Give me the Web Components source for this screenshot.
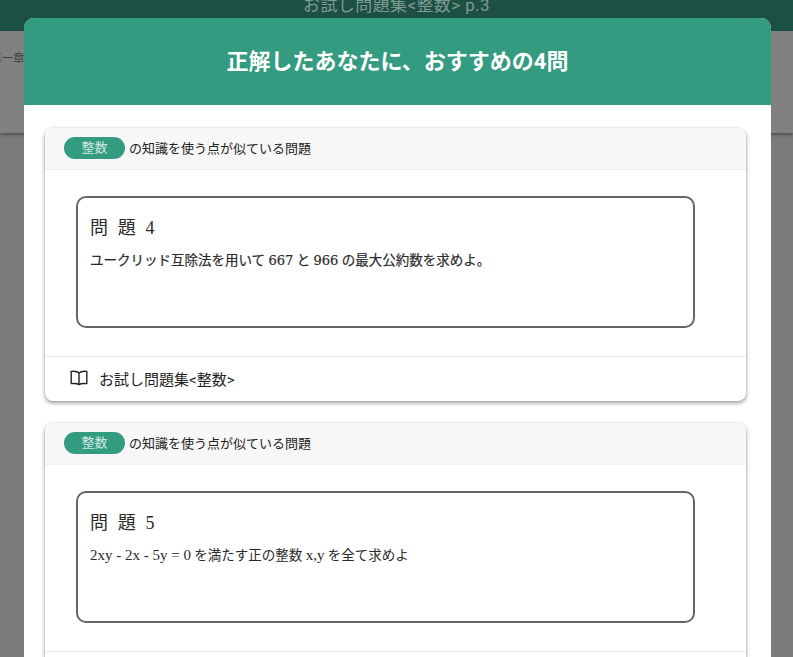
<!DOCTYPE html>
<html lang="ja">
<head>
<meta charset="utf-8">
<title>お試し問題集</title>
<style>
  html, body { margin: 0; height: 100%; overflow: hidden; }
  body { font-family: Roboto, "Noto Sans CJK JP", sans-serif; }
  .wide { font-family: "DejaVu Serif", serif; font-size: 13px; }
  .formula { font-size: 15px; line-height: 1; }
</style>
</head>
<body>
<app-page>
  <span slot="title">お試し問題集&lt;整数&gt; p.3</span>
  <span slot="crumb">第一章</span>
</app-page>
<recommend-modal heading="正解したあなたに、おすすめの4問">
  <problem-card tag="整数" number="4" book="お試し問題集&lt;整数&gt;" style="--text-stroke: .2px">ユークリッド互除法を用いて <span class="wide">667</span> と <span class="wide">966</span> の最大公約数を求めよ。</problem-card>
  <problem-card tag="整数" number="5" book="お試し問題集&lt;整数&gt;"><span class="formula">2xy - 2x - 5y = 0</span> を満たす正の整数 <span class="formula">x,y</span> を全て求めよ</problem-card>
</recommend-modal>
<script>
class AppPage extends HTMLElement {
  constructor() {
    super();
    this.attachShadow({ mode: 'open' });
    this.shadowRoot.innerHTML = `
      <style>
        :host { display: block; height: 657px; background: #7b7b7b; overflow: hidden; }
        .bar {
          height: 31px;
          background: #1b5042;
          color: #7f9b92;
          font-size: 17px;
          line-height: 10px;
          letter-spacing: .4px;
          text-align: center;
          overflow: hidden;
        }
        .sub {
          height: 102px;
          background: #818181;
          box-shadow: 0 2px 3px rgba(0,0,0,.35);
          color: #3e4442;
          font-size: 11.5px;
          line-height: 55px;
          overflow: hidden;
        }
        .sub span { display: block; margin-left: -10px; }
      </style>
      <div class="bar"><slot name="title"></slot></div>
      <div class="sub"><span><slot name="crumb"></slot></span></div>
    `;
  }
}

class RecommendModal extends HTMLElement {
  constructor() {
    super();
    this.attachShadow({ mode: 'open' });
    this.shadowRoot.innerHTML = `
      <style>
        /* floats over the page */
        :host {
          display: block;
          position: fixed;
          left: 24px;
          top: 18px;
          width: 747px;
          height: 639px;
          background: #fff;
          border-radius: 10px 10px 0 0;
          overflow: hidden;
        }
        header {
          height: 87px;
          background: #329b80;
          color: #fff;
          font-size: 22px;
          font-weight: 700;
          line-height: 87px;
          text-align: center;
        }
        .body {
          display: flex;
          flex-direction: column;
          gap: 22px;
          padding: 23px 25px 0 21px;
        }
      </style>
      <header></header>
      <div class="body"><slot></slot></div>
    `;
  }

  connectedCallback() {
    this.shadowRoot.querySelector('header').textContent = this.getAttribute('heading');
  }
}

class ProblemCard extends HTMLElement {
  constructor() {
    super();
    this.attachShadow({ mode: 'open' });
    this.shadowRoot.innerHTML = `
      <style>
        :host {
          display: block;
          height: 273px;
          background: #fff;
          border-radius: 8px;
          box-shadow: 0 2px 4px rgba(0,0,0,.4), 0 0 2px rgba(0,0,0,.12);
          color: #222;
          overflow: hidden;
        }
        .head {
          display: flex;
          align-items: center;
          gap: 4px;
          box-sizing: border-box;
          height: 42px;
          padding: 0 0 2px 19px;
          background: #f7f7f7;
          border-bottom: 1px solid #efefef;
          font-size: 13px;
        }
        .tag {
          width: 61px;
          height: 22px;
          border-radius: 11px;
          background: #329b80;
          color: #cfe8e0;
          font-size: 13px;
          line-height: 22px;
          text-align: center;
        }
        .main { height: 187px; box-sizing: border-box; padding: 26px 0 0 31px; border-bottom: 1px solid #ececec; }
        .box {
          box-sizing: border-box;
          width: 619px;
          height: 132px;
          padding: 18px 12px 0;
          border: 2px solid #666;
          border-radius: 10px;
          font-family: "Liberation Serif", "Noto Sans CJK JP", serif;
          color: #2a2a2a;
        }
        .num { font-size: 18px; line-height: 24px; word-spacing: 2px; letter-spacing: 1.6px; }
        .text { margin-top: 11px; font-size: 13.5px; line-height: 20px; -webkit-text-stroke: var(--text-stroke, 0) #2a2a2a; }
        .foot {
          display: flex;
          align-items: center;
          gap: 10px;
          height: 43px;
          padding: 0 0 1px 24px;
          box-sizing: border-box;
          font-size: 15px;
          color: #1f1f1f;
        }
        svg { width: 20px; height: 20px; }
      </style>
      <div class="head"><span class="tag"></span><span>の知識を使う点が似ている問題</span></div>
      <div class="main">
        <div class="box">
          <div class="num"></div>
          <div class="text"><slot></slot></div>
        </div>
      </div>
      <div class="foot">
        <svg viewBox="0 0 20 20" fill="none" stroke="#222" stroke-width="1.4" stroke-linejoin="round">
          <path d="M10 5C8.5 3.4 6 3 2.2 3.4V15.6C6 15.2 8.5 15.4 10 16.6C11.5 15.4 14 15.2 17.8 15.6V3.4C14 3 11.5 3.4 10 5V16.6"/>
        </svg>
        <span class="book"></span>
      </div>
    `;
  }

  connectedCallback() {
    const root = this.shadowRoot;
    root.querySelector('.tag').textContent = this.getAttribute('tag');
    root.querySelector('.num').textContent = '問 題  ' + this.getAttribute('number');
    root.querySelector('.book').textContent = this.getAttribute('book');
  }
}

customElements.define('app-page', AppPage);
customElements.define('recommend-modal', RecommendModal);
customElements.define('problem-card', ProblemCard);
</script>
</body>
</html>
